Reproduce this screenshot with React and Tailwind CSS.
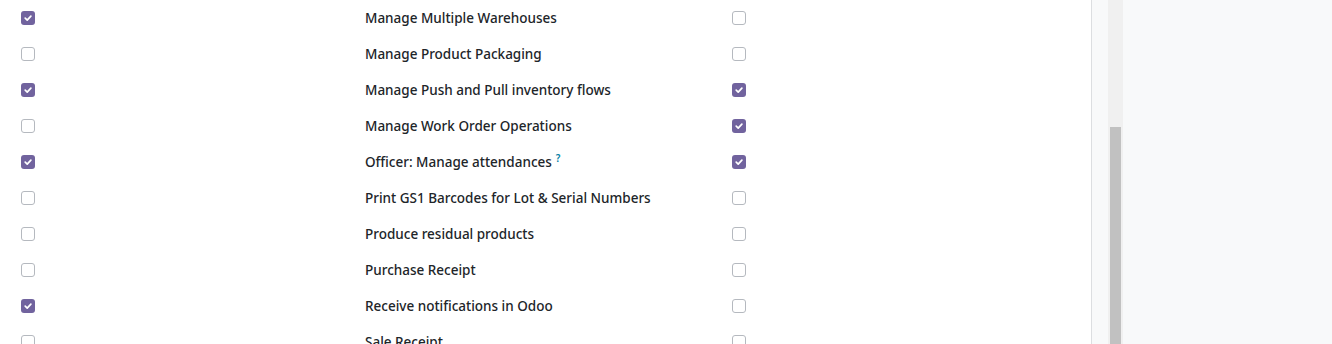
import React from 'react';

const ROWS = [
  { left: true, label: 'Manage Multiple Warehouses', right: false },
  { left: false, label: 'Manage Product Packaging', right: false },
  { left: true, label: 'Manage Push and Pull inventory flows', right: true },
  { left: false, label: 'Manage Work Order Operations', right: true },
  { left: true, label: 'Officer: Manage attendances', right: true, help: true },
  { left: false, label: 'Print GS1 Barcodes for Lot & Serial Numbers', right: false },
  { left: false, label: 'Produce residual products', right: false },
  { left: false, label: 'Purchase Receipt', right: false },
  { left: true, label: 'Receive notifications in Odoo', right: false },
  { left: false, label: 'Sale Receipt', right: false },
];

function Check({ checked }) {
  if (!checked) {
    return <span className="block w-[14px] h-[14px] rounded-[3px] border border-[#b5b9bf] bg-white" />;
  }
  return (
    <span className="flex w-[14px] h-[14px] rounded-[3px] bg-[#71639e] items-center justify-center">
      <svg width="10" height="10" viewBox="0 0 10 10" fill="none">
        <path d="M2.2 5.2 L4.2 7.1 L7.9 3.1" stroke="white" strokeWidth="1.7" strokeLinecap="round" strokeLinejoin="round" />
      </svg>
    </span>
  );
}

export default function App() {
  return (
    <div className="flex h-[344px] overflow-hidden bg-white" style={{ fontFamily: '"Noto Sans", sans-serif' }}>
      <div className="w-[1092px] shrink-0 border-r border-[#dcdee1]">
        {ROWS.map((r) => (
          <div key={r.label} className="grid grid-cols-[365px_367px_1fr] items-center h-[36px]">
            <div className="pl-[21px]"><Check checked={r.left} /></div>
            <div className="pt-[2px] text-[13.5px] font-medium text-[#212529] leading-none whitespace-nowrap">
              {r.label}
              {r.help && <sup className="ml-1 text-[10px] text-[#0180a5] font-semibold">?</sup>}
            </div>
            <div><Check checked={r.right} /></div>
          </div>
        ))}
      </div>
      <div className="flex-1 flex bg-[#f8f9fa]">
        <div className="ml-[16px] w-[15px] bg-[#f0f0f0] flex flex-col pt-[127px]">
          <div className="mx-[2px] flex-1 bg-[#c1c1c1]" />
        </div>
      </div>
    </div>
  );
}
